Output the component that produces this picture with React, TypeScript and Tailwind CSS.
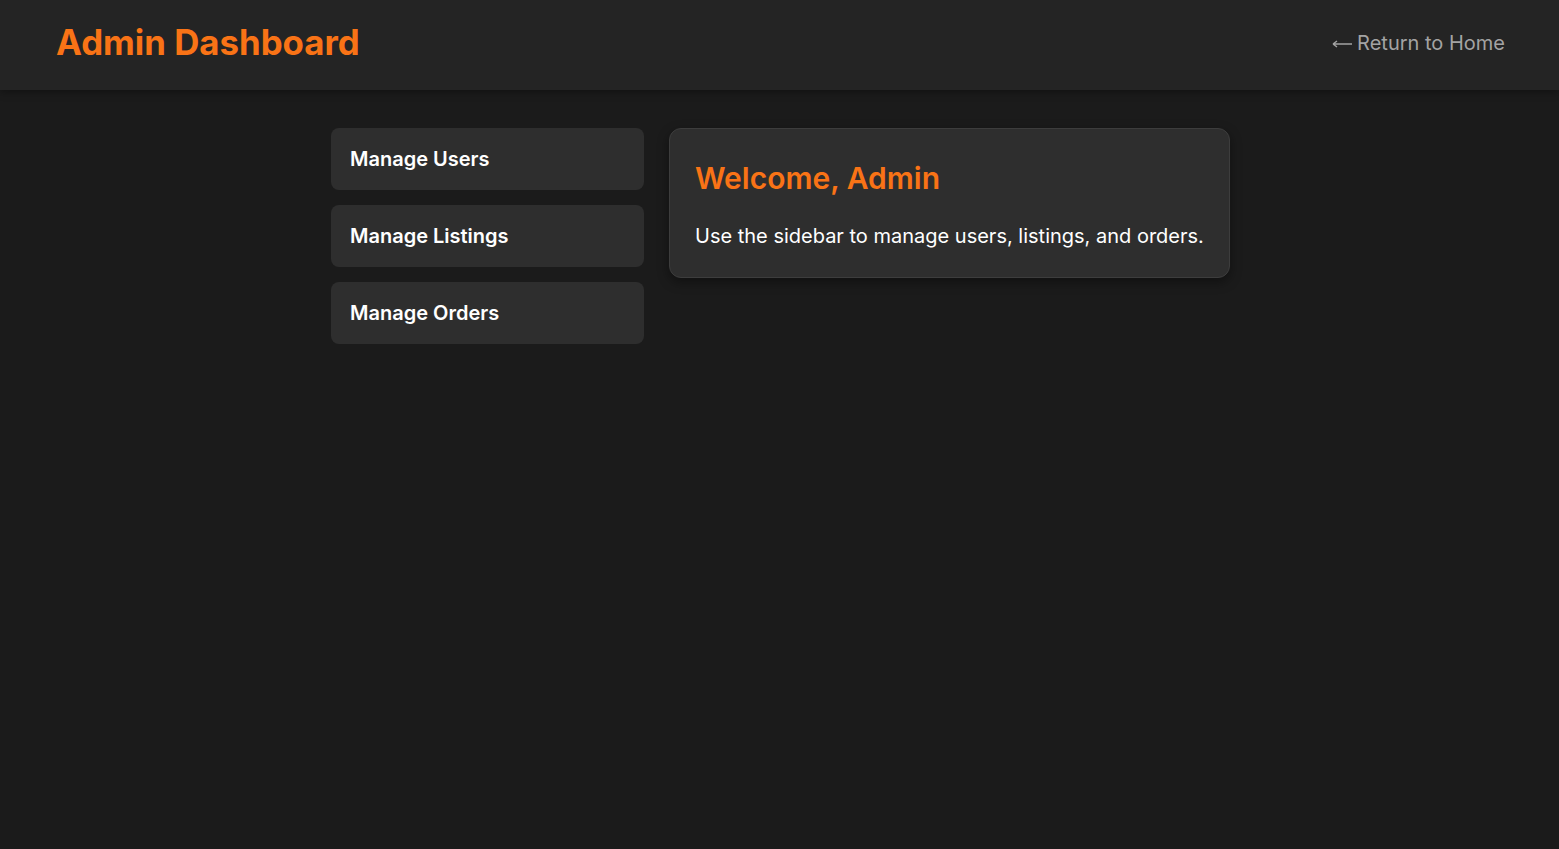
export default function App() {
  const items = ["Manage Users", "Manage Listings", "Manage Orders"];
  return (
    <div className="min-h-screen bg-[#1b1b1b] font-['Inter',sans-serif] text-white">
      <header className="flex h-[90px] items-center justify-between bg-[#242424] pr-[54px] pb-[5px] pl-14 shadow-[0_2px_8px_rgba(0,0,0,0.35)]">
        <h1 className="text-[34.8px] font-bold text-[#f97316]">Admin Dashboard</h1>
        <a className="flex items-center gap-[5px] text-[20px] text-[#a3a3a3]" href="#">
          <svg width="20" height="10" viewBox="0 0 20 10" fill="none" stroke="currentColor" strokeWidth="1.4" className="mt-[2px]">
            <path d="M1 5H20M1 5L5 2M1 5L5 8" />
          </svg>
          Return to Home
        </a>
      </header>
      <main className="mx-auto flex w-[899px] items-start gap-[25px] pt-[38px] pl-[2px] box-content">
        <nav className="flex w-[313px] shrink-0 flex-col gap-[15px]">
          {items.map((t) => (
            <a
              key={t}
              href="#"
              className="rounded-lg bg-[#2e2e2e] py-4 pr-5 pl-[19px] text-[20px] leading-[30px] font-semibold"
            >
              {t}
            </a>
          ))}
        </nav>
        <section className="rounded-xl border border-[#3d3d3d] bg-[#2e2e2e] px-[25px] pt-[31px] pb-[26px] shadow-[0_4px_12px_rgba(0,0,0,0.4)]">
          <h2 className="mb-[25px] text-[30px] leading-9 font-semibold text-[#f97316]">Welcome, Admin</h2>
          <p className="text-[20px] leading-[30px] whitespace-nowrap">
            Use the sidebar to manage users, listings, and orders.
          </p>
        </section>
      </main>
    </div>
  );
}
